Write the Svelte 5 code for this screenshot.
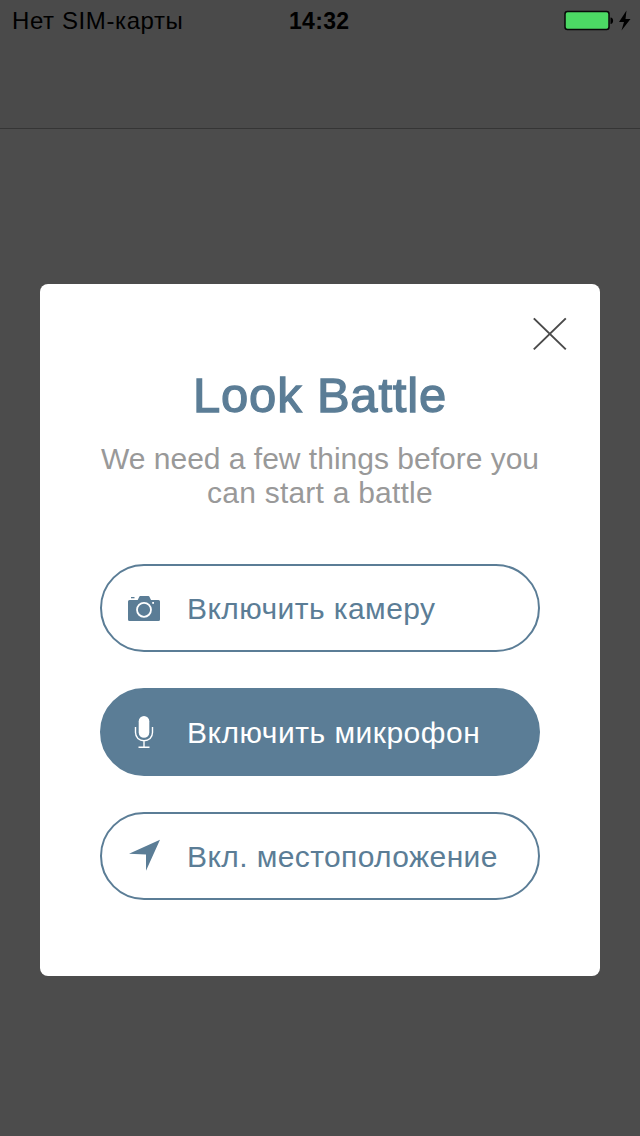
<script>
  const actions = [
    { id: 'camera', label: 'Включить камеру' },
    { id: 'microphone', label: 'Включить микрофон' },
    { id: 'location', label: 'Вкл. местоположение' }
  ];
  let selected = $state('microphone');
</script>

<div class="screen">
  <header>
    <div class="status">
      <span class="carrier">Нет SIM-карты</span>
      <span class="time">14:32</span>
      <svg class="battery" width="68" height="22" viewBox="0 0 68 22">
        <rect x="1" y="1.500" width="44" height="18" rx="2.500" fill="#4cd964" stroke="#080808" stroke-width="1.500" />
        <path d="M46.500 7.500c3.500 .3 3.500 6.200 0 6.500z" fill="#000" />
        <path d="M62.500 .5 55 12h5l-2.500 8.500L66.500 9h-5z" fill="#000" />
      </svg>
    </div>
  </header>

  <main>
    <section class="dialog">
      <button class="close" aria-label="Close">
        <svg width="34" height="34" viewBox="0 0 34 34">
          <path d="M.8 1.400 32.800 32.400M32.800 1.400.8 32.400" stroke="#4a4a4a" stroke-width="2" />
        </svg>
      </button>
      <h1>Look Battle</h1>
      <p>We need a few things before you<br /><span class="second">can start a battle</span></p>
      <div class="actions">
        {#each actions as action}
          <button class="action {action.id}" class:filled={selected === action.id} onclick={() => (selected = action.id)}>
            <svg width="34" height="34" viewBox="0 0 34 34">
              {#if action.id === 'camera'}
                <path fill="currentColor" d="M2.500 9h8.200l1.700-3.500Q12.700 5 13.200 5h8.300q.5 0 .8.500L24 9h7.500Q33 9 33 10.500v18q0 1.500-1.500 1.500h-29Q1 30 1 28.500v-18Q1 9 2.500 9z" />
                <rect x="4" y="6" width="3.500" height="1.300" fill="currentColor" />
                <circle cx="17" cy="18.800" r="7" fill="none" stroke="#fff" stroke-width="1.800" />
                <rect x="25.200" y="11" width="1.800" height="1.800" fill="#fff" />
              {:else if action.id === 'microphone'}
                <rect x="11.700" y="1" width="10.600" height="21.800" rx="5.300" fill="currentColor" />
                <path d="M8.500 12v5.500c0 4.800 3.600 8.200 8.500 8.200s8.500-3.400 8.500-8.200V12M17 25.700v6M11.500 32.200h11" fill="none" stroke="currentColor" stroke-width="1.400" />
              {:else}
                <path d="M33 .7 19 31.700V15.500L2 14.700z" fill="currentColor" />
              {/if}
            </svg>
            <span>{action.label}</span>
          </button>
        {/each}
      </div>
    </section>
  </main>
</div>

<style>
  :global(body) { margin: 0; }
  .screen {
    box-sizing: border-box;
    height: 1136px;
    background: #4c4c4c;
    display: flex;
    flex-direction: column;
    font-family: "Liberation Sans", sans-serif;
    overflow: hidden;
  }
  header {
    box-sizing: border-box;
    height: 129px;
    background: #4a4a4a;
    border-bottom: 1px solid #353535;
  }
  .status {
    display: grid;
    grid-template-columns: 277px auto 1fr;
    height: 42px;
    padding: 0 8px 0 12px;
    align-items: center;
    color: #000;
    font-size: 24px;
    line-height: 42px;
  }
  .carrier { letter-spacing: 0.6px; white-space: nowrap; }
  .time { font-weight: bold; font-size: 23px; letter-spacing: 0.3px; }
  .battery { justify-self: end; }
  main { padding: 155px 40px 0; }
  .dialog {
    box-sizing: border-box;
    height: 692px;
    border-radius: 8px;
    background: #fff;
    padding: 33px 33px 0;
    display: flex;
    flex-direction: column;
    align-items: center;
  }
  button { font: inherit; cursor: pointer; }
  .close {
    align-self: flex-end;
    width: 34px;
    height: 34px;
    padding: 0;
    border: 0;
    background: none;
  }
  .close svg { display: block; }
  h1 {
    margin: 16px 0 0;
    height: 56px;
    line-height: 56px;
    color: #5b7d96;
    font-size: 49px;
    font-weight: normal;
    letter-spacing: 0.8px;
    -webkit-text-stroke: 1.3px #5b7d96;
  }
  p {
    margin: 19px 0 0;
    color: #999;
    font-size: 30px;
    line-height: 34px;
    text-align: center;
    white-space: nowrap;
  }
  .second { letter-spacing: 0.22px; }
  .actions {
    display: flex;
    flex-direction: column;
    gap: 36px;
    margin-top: 54px;
  }
  .action {
    box-sizing: border-box;
    width: 440px;
    height: 88px;
    border: 2px solid #5b7d96;
    border-radius: 44px;
    background: #fff;
    color: #5b7d96;
    display: flex;
    align-items: center;
    gap: 26px;
    padding: 0 0 0 25px;
    font-size: 30px;
    white-space: nowrap;
  }
  .action svg { flex: none; }
  .action span { padding-top: 1px; }
  .camera { letter-spacing: 0.43px; }
  .microphone { letter-spacing: 0.5px; }
  .location { letter-spacing: 0.4px; }
  .filled { background: #5b7d96; color: #fff; }
</style>
